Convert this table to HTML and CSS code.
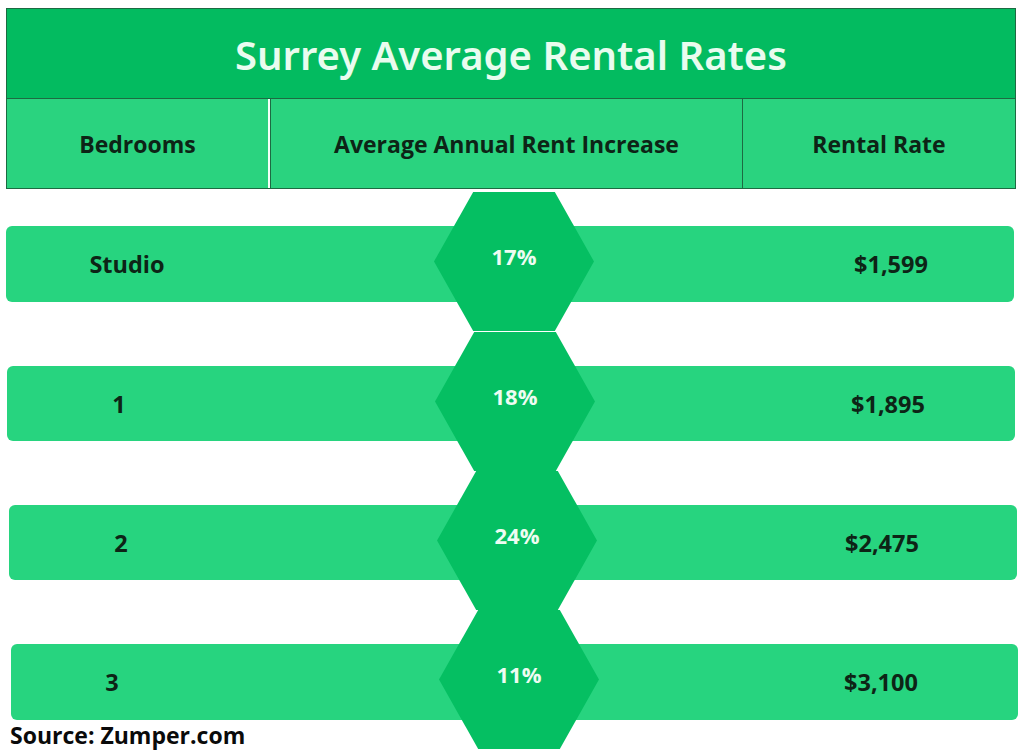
FILE: index.html
```html
<!DOCTYPE html>
<html lang="en">
<head>
<meta charset="utf-8">
<title>Surrey Average Rental Rates</title>
<link rel="stylesheet" href="styles.css">
</head>
<body>
<div class="chart">
  <div class="table-head">
    <div class="title">Surrey Average Rental Rates</div>
    <div class="cols">
      <div class="col c1">Bedrooms</div>
      <div class="col c2">Average Annual Rent Increase</div>
      <div class="col c3">Rental Rate</div>
    </div>
  </div>
  <div class="rows">
    <div class="row r1">
      <span class="bed">Studio</span>
      <div class="hex"><span>17%</span></div>
      <span class="rate">$1,599</span>
    </div>
    <div class="row r2">
      <span class="bed">1</span>
      <div class="hex"><span>18%</span></div>
      <span class="rate">$1,895</span>
    </div>
    <div class="row r3">
      <span class="bed">2</span>
      <div class="hex"><span>24%</span></div>
      <span class="rate">$2,475</span>
    </div>
    <div class="row r4">
      <span class="bed">3</span>
      <div class="hex"><span>11%</span></div>
      <span class="rate">$3,100</span>
    </div>
  </div>
  <div class="source">Source: Zumper.com</div>
</div>
</body>
</html>
```
FILE: styles.css
```css
html, body {
  margin: 0;
  padding: 0;
  background: #ffffff;
}
body {
  width: 1023px;
  height: 752px;
  overflow: hidden;
  font-family: "Open Sans", "Noto Sans", sans-serif;
}
.chart {
  display: flex;
  flex-direction: column;
}
.table-head {
  margin: 8px 0 0 6px;
  width: 1010px;
  border: 1px solid #1d6a42;
  box-sizing: border-box;
}
.title {
  height: 90px;
  background: #03bb60;
  border-bottom: 1px solid #1d6a42;
  color: #e9fcef;
  font-family: "Noto Sans", "Open Sans", sans-serif;
  font-weight: 600;
  font-size: 40px;
  display: flex;
  align-items: center;
  justify-content: center;
  padding-top: 2px;
  box-sizing: border-box;
}
.cols {
  display: flex;
  height: 89px;
  background: #2ad37f;
}
.col {
  display: flex;
  align-items: center;
  justify-content: center;
  color: #0d2416;
  font-weight: 700;
  font-size: 23px;
}
.c1 {
  width: 261px;
  border-right: 2px solid #f4fff8;
}
.c2 {
  width: 471px;
  border-left: 1px solid #1d6a42;
  border-right: 1px solid #1d6a42;
}
.c3 {
  flex: 1;
}
.rows {
  display: flex;
  flex-direction: column;
  gap: 64px;
  margin-top: 37px;
}
.row {
  position: relative;
  height: 76px;
  background: #27d47f;
  border-radius: 6px;
  display: flex;
  align-items: center;
  color: #0d2416;
  font-weight: 700;
  font-size: 23.5px;
}
.r1 { margin-left: 6px; width: 1008px; }
.r2 { margin-left: 7px; width: 1008px; height: 75px; }
.r3 { margin-left: 9px; width: 1008px; height: 75px; }
.r4 { margin-left: 11px; width: 1007px; }
.bed {
  width: 224px;
  text-align: center;
}
.r1 .bed { width: 242px; }
.r4 .bed { width: 202px; }
.rate {
  margin-left: auto;
  width: 254px;
  text-align: center;
}
.r1 .rate { width: 246px; }
.r3 .rate { width: 270px; }
.r4 .rate { width: 274px; }
.hex {
  position: absolute;
  left: 428px;
  top: -34px;
  width: 160px;
  height: 139px;
  background: #05bf62;
  clip-path: polygon(24.5% 0, 75.5% 0, 100% 50%, 75.5% 100%, 24.5% 100%, 0 50%);
  display: flex;
  align-items: center;
  justify-content: center;
  color: #eefcf2;
  font-size: 22px;
  font-weight: 700;
  z-index: 1;
}
.hex span {
  margin-top: -11px;
}
.source {
  margin: 4px 0 0 10px;
  font-weight: 700;
  font-size: 23px;
  line-height: 22px;
  color: #0a0a0a;
}
```
